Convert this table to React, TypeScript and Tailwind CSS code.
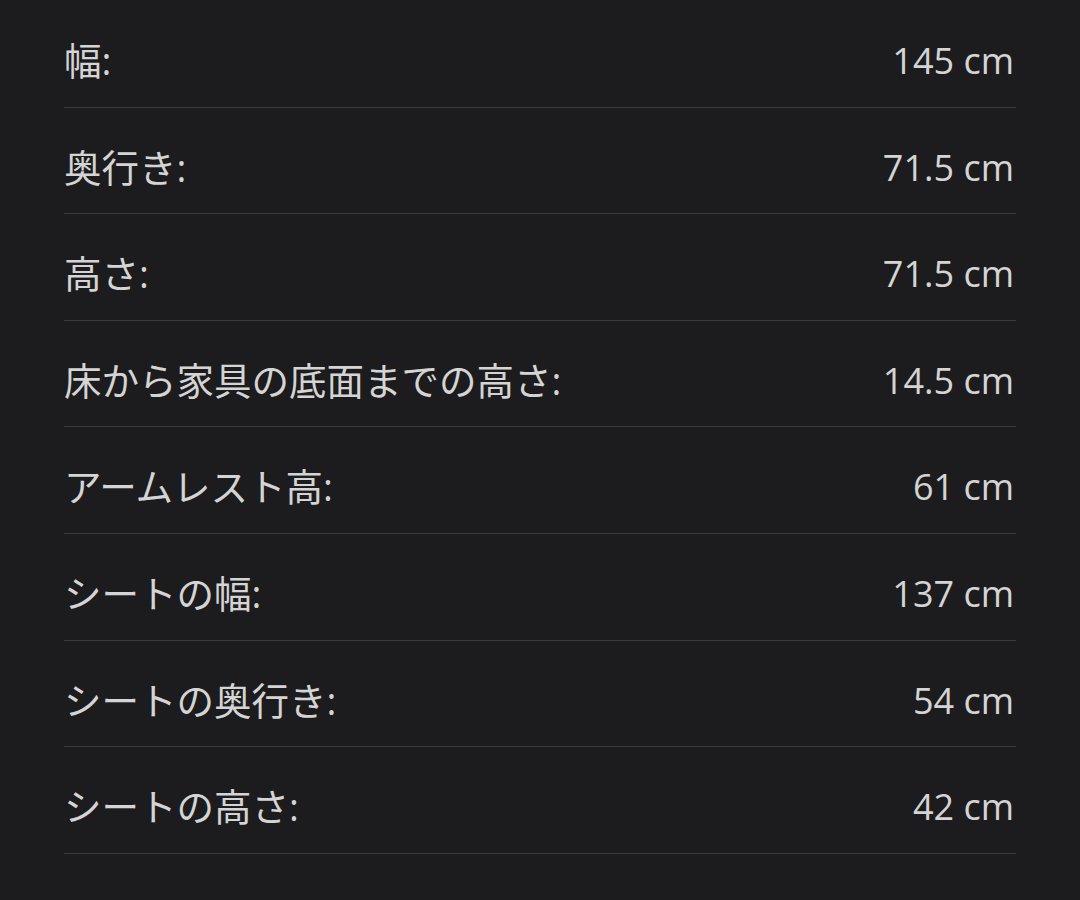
import React from "react";

const specs = [
  { label: "幅:", value: "145 cm" },
  { label: "奥行き:", value: "71.5 cm" },
  { label: "高さ:", value: "71.5 cm" },
  { label: "床から家具の底面までの高さ:", value: "14.5 cm" },
  { label: "アームレスト高:", value: "61 cm" },
  { label: "シートの幅:", value: "137 cm" },
  { label: "シートの奥行き:", value: "54 cm" },
  { label: "シートの高さ:", value: "42 cm" },
];

const App = () => {
  return (
    <div
      className="min-h-screen w-full bg-[#1c1c1e] pt-px text-[#d4d4d4]"
      style={{ fontFamily: '"Open Sans", "Noto Sans CJK JP", sans-serif' }}
    >
      <div className="mx-16">
        {specs.map((spec) => (
          <div
            key={spec.label}
            className="flex items-center justify-between border-b border-[#3a3a3c] pt-[35px] pb-[20.6px] leading-[50px]"
          >
            <span className="text-[37.5px]">{spec.label}</span>
            <span className="mr-[2px] text-[36px]">{spec.value}</span>
          </div>
        ))}
      </div>
    </div>
  );
};

export default App;
